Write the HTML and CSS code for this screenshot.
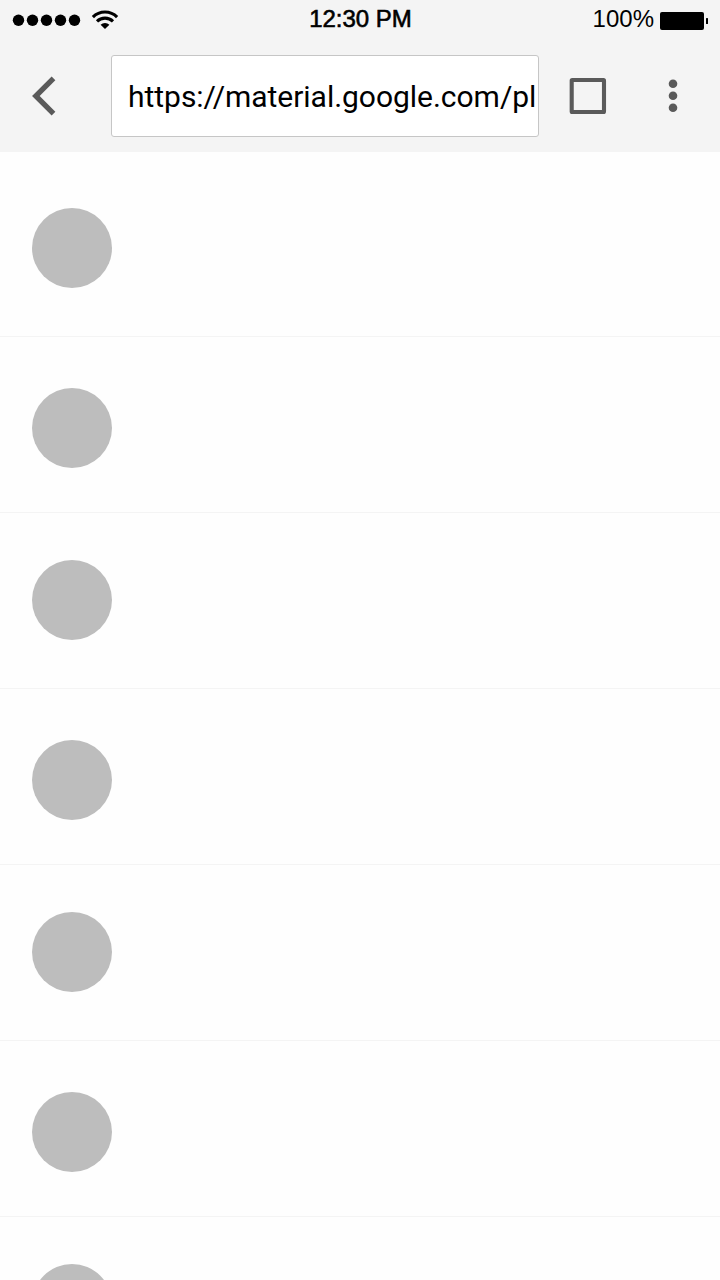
FILE: index.html
```html
<!DOCTYPE html>
<html lang="en">
<head>
<meta charset="utf-8">
<title>Browser</title>
<link rel="stylesheet" href="styles.css">
</head>
<body>
<header class="chrome">
  <div class="status">
    <div class="status-left">
      <svg width="68" height="12" viewBox="0 0 68 12"><circle cx="5.5" cy="6.3" r="5.7"/><circle cx="19.5" cy="6.3" r="5.7"/><circle cx="33.5" cy="6.3" r="5.7"/><circle cx="47.5" cy="6.3" r="5.7"/><circle cx="61.5" cy="6.3" r="5.7"/></svg>
      <svg class="wifi" width="26" height="18" viewBox="0 0 26 18"><path d="M.9 6.1A17 17 0 0 1 25.1 6.1M5 10.4A11.4 11.4 0 0 1 21 10.4" fill="none" stroke="#000" stroke-width="3.1"/><path d="M8.6 13.8A6.2 6.2 0 0 1 17.4 13.8L13 18Z"/></svg>
    </div>
    <time class="clock">12:30 PM</time>
    <div class="status-right">
      <span class="percent">100%</span>
      <svg width="48" height="18" viewBox="0 0 48 18"><rect width="44" height="18" rx="2"/><rect x="46" y="6" width="2" height="6" rx=".5"/></svg>
    </div>
  </div>
  <nav class="toolbar">
    <svg class="back" width="24" height="40" viewBox="0 0 24 40"><path d="M21.5 2.4L3.8 20L21.5 37.6" fill="none" stroke="#5a5a5a" stroke-width="5.3"/></svg>
    <div class="address"><span class="url">https://material.google.com/pl</span></div>
    <svg class="tabs" width="38" height="38" viewBox="0 0 38 38"><rect x="2.7" y="3" width="32.3" height="32" rx=".5" fill="none" stroke="#5a5a5a" stroke-width="4.1" stroke-linejoin="round"/></svg>
    <svg class="more" width="10" height="34" viewBox="0 0 10 34" fill="#5a5a5a"><circle cx="5" cy="4.8" r="4.3"/><circle cx="5" cy="16.8" r="4.3"/><circle cx="5" cy="28.8" r="4.3"/></svg>
  </nav>
</header>
<main class="list">
  <div class="row first"><div class="avatar"></div></div>
  <div class="row"><div class="avatar"></div></div>
  <div class="row"><div class="avatar"></div></div>
  <div class="row"><div class="avatar"></div></div>
  <div class="row"><div class="avatar"></div></div>
  <div class="row"><div class="avatar"></div></div>
  <div class="row last"><div class="avatar"></div></div>
</main>
</body>
</html>
```
FILE: styles.css
```css
* { box-sizing: border-box; }
body {
  margin: 0;
  width: 720px;
  height: 1280px;
  overflow: hidden;
  background: #fefefe;
  color: #000;
  font-family: "Liberation Sans", Arial, sans-serif;
}
svg { display: block; flex: none; overflow: visible; }
.chrome { height: 152px; background: #f4f4f4; }
.status {
  height: 40px;
  display: grid;
  grid-template-columns: 1fr auto 1fr;
  padding: 0 12px 0 13px;
  font-size: 24px;
  line-height: 38px;
}
.status-left { display: flex; align-items: flex-start; gap: 11px; padding-top: 14px; }
.wifi { margin-top: -3px; }
.clock { -webkit-text-stroke: .6px #000; letter-spacing: 0; }
.status-right { display: flex; justify-content: flex-end; gap: 6px; }
.status-right svg { margin-top: 12px; }
.toolbar { height: 112px; display: flex; align-items: center; padding-left: 32px; }
.address {
  width: 428px;
  height: 82px;
  margin-left: 55px;
  padding-left: 16px;
  border: 1px solid #c6c6c6;
  border-radius: 3px;
  background: #fff;
  overflow: hidden;
}
.url { font: 30px/82px Roboto, sans-serif; letter-spacing: -.03px; white-space: nowrap; }
.tabs { margin-left: 30px; }
.more { margin-left: 61px; }
.list { height: 1128px; overflow: hidden; }
.row {
  height: 176px;
  padding: 51px 0 0 32px;
  border-bottom: 1px solid #f4f4f4;
}
.row:nth-child(odd) { padding-top: 47px; }
.row.first { height: 185px; padding-top: 56px; }
.row.last { height: 63px; border-bottom: 0; overflow: hidden; }
.avatar { width: 80px; height: 80px; border-radius: 50%; background: #bdbdbd; }
```
